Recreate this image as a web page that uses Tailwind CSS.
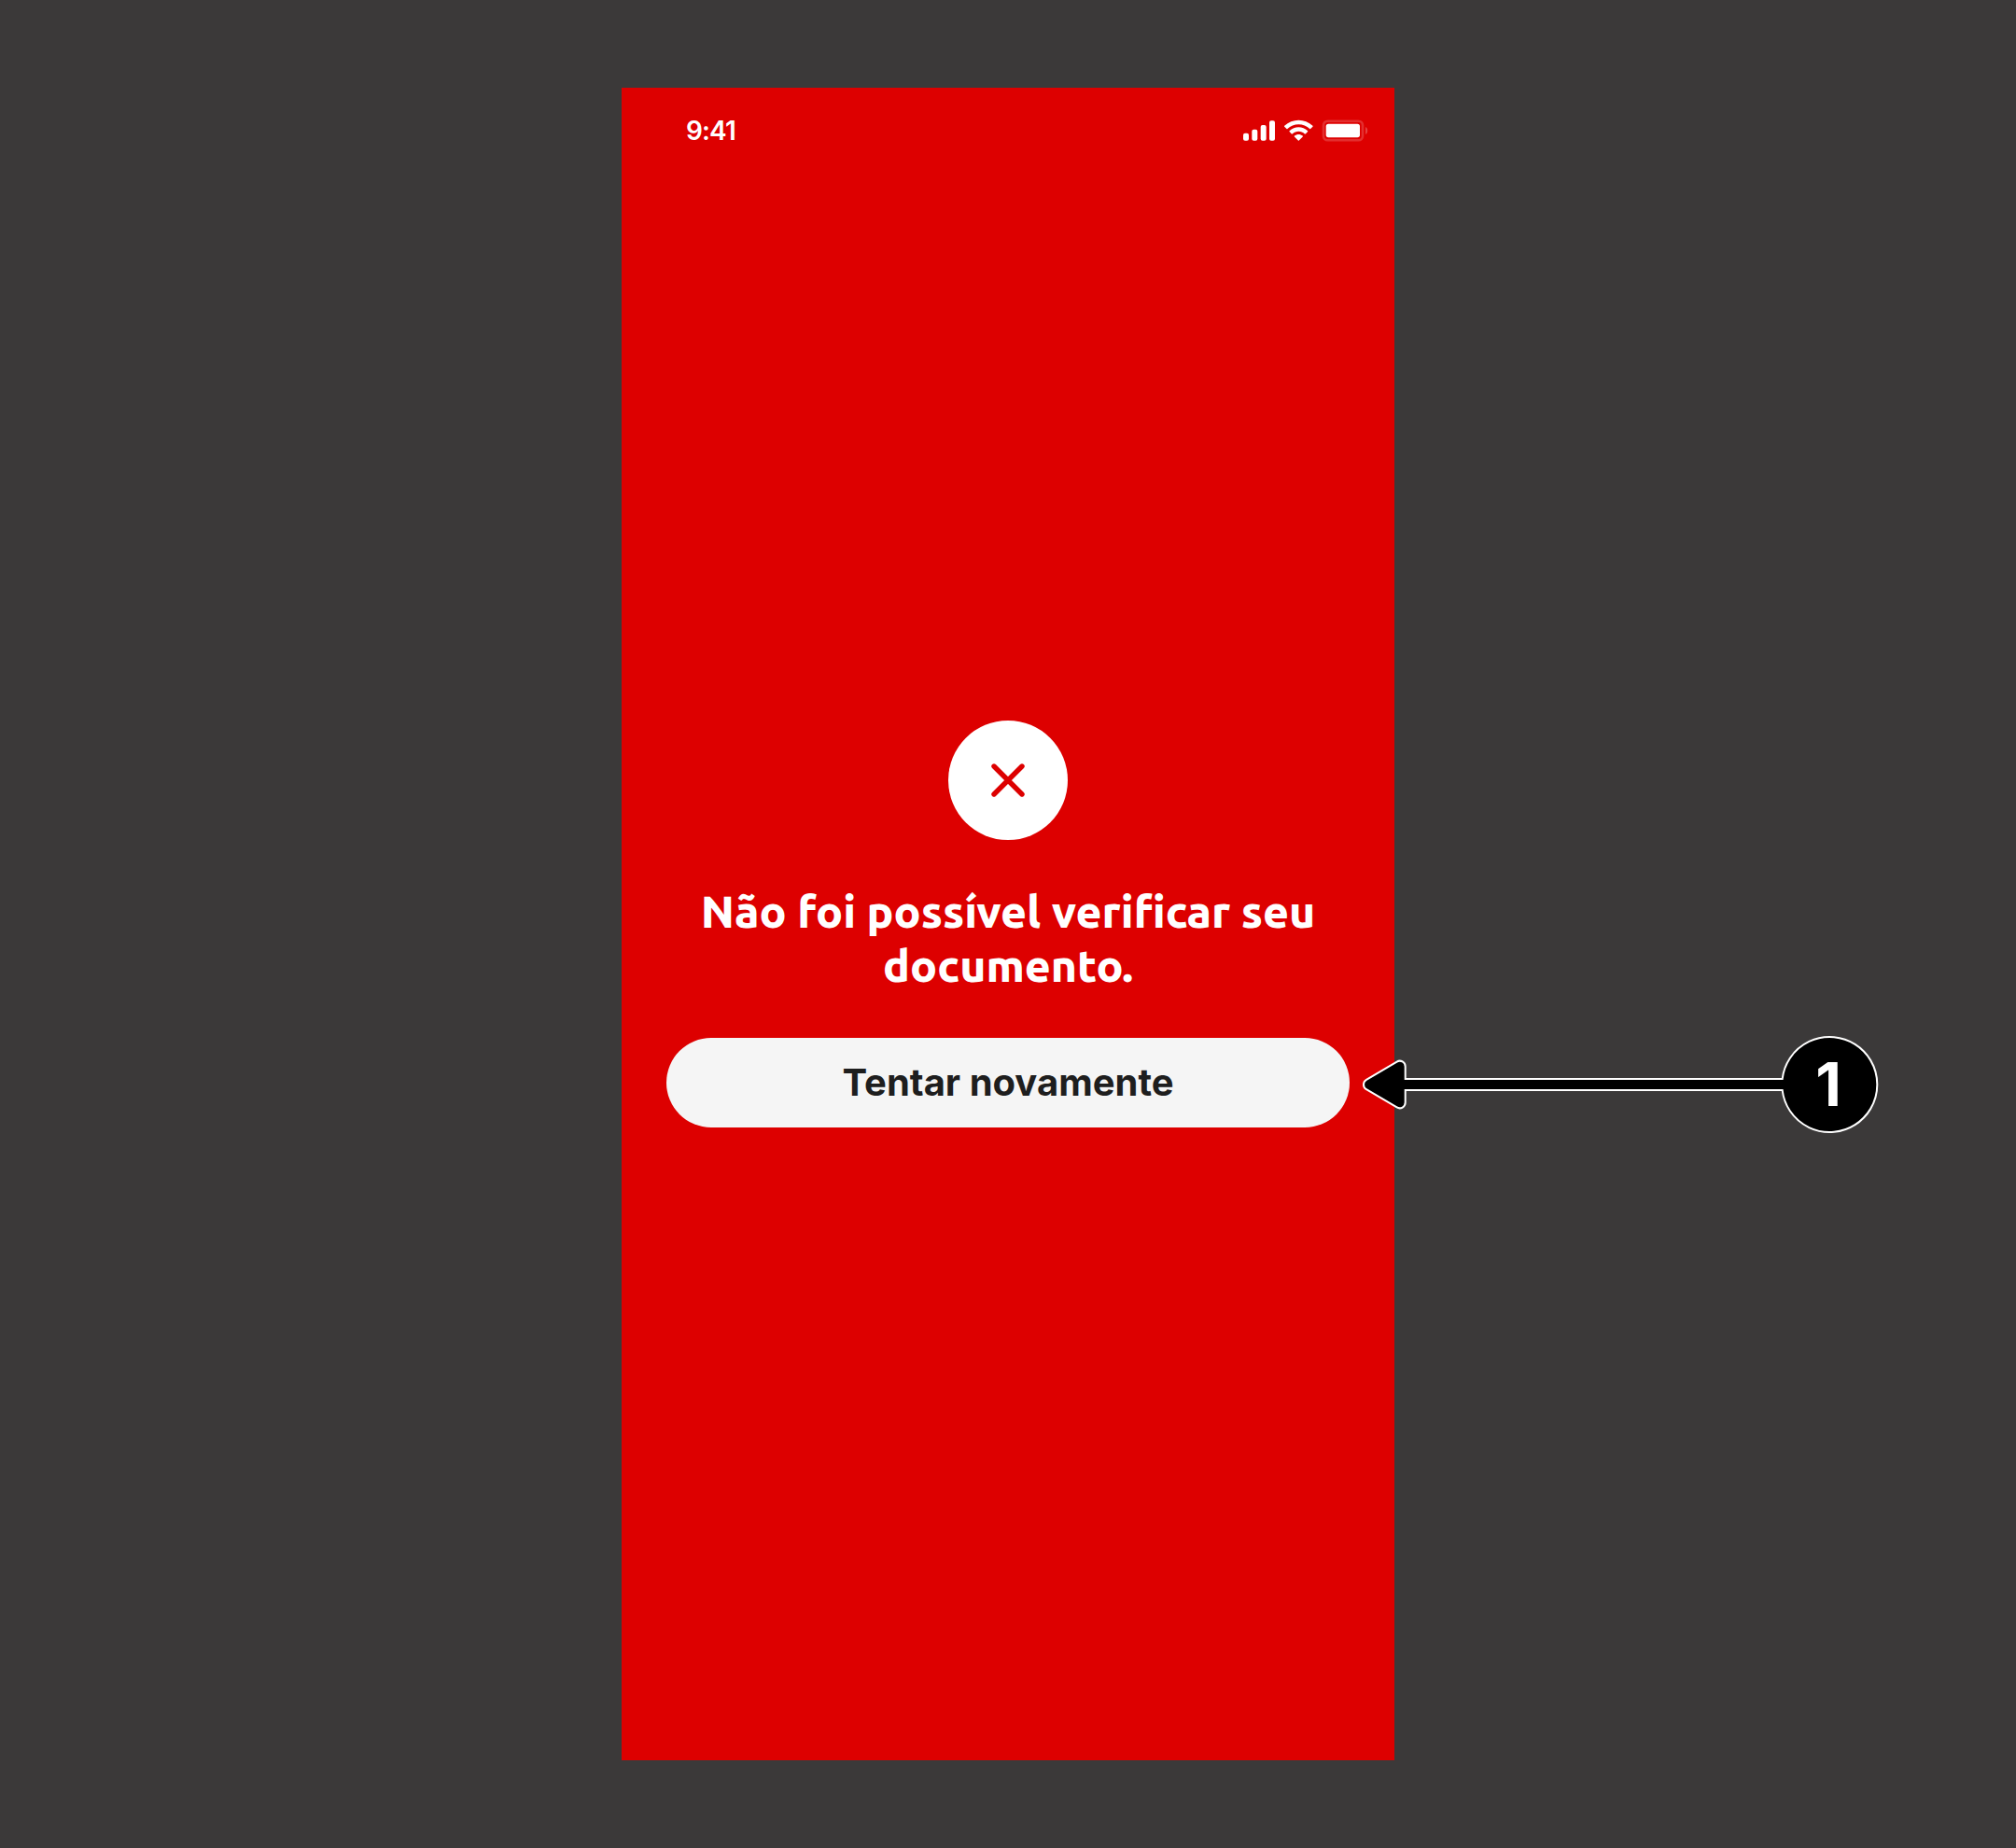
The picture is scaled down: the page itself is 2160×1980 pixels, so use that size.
<!DOCTYPE html>
<html lang="pt-BR">
<head>
<meta charset="utf-8">
<title>Verificação de documento</title>
<script src="https://cdn.jsdelivr.net/npm/@tailwindcss/browser@4"></script>
</head>
<body class="bg-[#3b3939]">
<div class="relative flex h-[1980px] w-[2160px] justify-center overflow-hidden pt-[94px] font-['Inter',sans-serif]">
  <main class="flex h-[1792px] w-[828px] flex-col bg-[#dd0000]">
    <header class="flex h-[92px] items-center justify-between pr-[28px] pl-[69px]">
      <span class="text-[28px] leading-none font-[560] tracking-[-0.9px] text-white">9:41</span>
      <svg class="h-[24px] w-[134px]" viewBox="0 0 134 24" fill="#fff">
        <rect x="0" y="14.7" width="6" height="8" rx="2"/>
        <rect x="9.3" y="10.7" width="6" height="12" rx="2"/>
        <rect x="18.7" y="6" width="6" height="16.7" rx="2"/>
        <rect x="28" y="1.3" width="6" height="21.4" rx="2"/>
        <path transform="translate(44 .7) scale(2)" d="M7.6667 2.2779C9.8915 2.278 12.0311 3.1329 13.6433 4.6658C13.7647 4.7842 13.9588 4.7827 14.0784 4.6625L15.2388 3.4917C15.2994 3.4307 15.3331 3.3481 15.3326 3.2622C15.332 3.1763 15.2973 3.0941 15.2359 3.0339C11.0043-1.0113 4.3285-1.0113.0969 3.0339C.0355 3.0941.0007 3.1762.0001 3.2621C-.0004 3.348.0333 3.4306.0938 3.4917L1.2546 4.6625C1.3741 4.7829 1.5683 4.7844 1.6896 4.6658C3.302 3.1328 5.4418 2.2779 7.6667 2.2779ZM7.6667 6.0868C8.889 6.0867 10.0677 6.541 10.9738 7.3614C11.0963 7.4779 11.2894 7.4753 11.4089 7.3558L12.5679 6.1849C12.629 6.1235 12.6629 6.0402 12.662 5.9536C12.6611 5.8671 12.6256 5.7845 12.5633 5.7243C9.804 3.1558 5.5316 3.1558 2.7724 5.7243C2.7101 5.7845 2.6745 5.8671 2.6737 5.9537C2.6729 6.0403 2.7069 6.1236 2.768 6.1849L3.9268 7.3558C4.0462 7.4753 4.2393 7.4779 4.3619 7.3614C5.2674 6.5415 6.4451 6.0872 7.6667 6.0868ZM9.9896 8.6497C9.9913 8.7365 9.9573 8.8202 9.8956 8.8809L7.8906 10.9041C7.8318 10.9636 7.7517 10.997 7.6681 10.997C7.5844 10.997 7.5043 10.9636 7.4455 10.9041L5.4402 8.8809C5.3785 8.8202 5.3446 8.7364 5.3464 8.6496C5.3482 8.5628 5.3854 8.4805 5.4495 8.4222C6.7295 7.3399 8.6047 7.3399 9.8847 8.4222C9.9487 8.4805 9.9879 8.5629 9.9896 8.6497Z"/>
        <rect x="86" y="1.7" width="42" height="20.6" rx="4.5" fill="none" stroke="#fff" stroke-width="2.6" stroke-opacity=".18"/>
        <rect x="88.7" y="4.7" width="36.3" height="14.6" rx="2.7"/>
        <path d="M131 8V16C132.6 15.3 133.2 13.8 133.2 12S132.6 8.7 131 8Z" fill-opacity=".25"/>
      </svg>
    </header>
    <section class="flex flex-col items-center px-12 pt-[586px]">
      <div class="flex size-32 items-center justify-center rounded-full bg-white">
        <svg class="size-9" viewBox="0 0 36 36" fill="none" stroke="#dd0000" stroke-width="5.4" stroke-linecap="round"><path d="M3 3L33 33M33 3L3 33"/></svg>
      </div>
      <h1 class="mt-[47px] text-center font-['Ubuntu','Noto_Sans',sans-serif] text-5xl leading-[58px] font-extrabold text-white">Não foi possível verificar seu<br>documento.</h1>
      <button class="mt-[49px] flex h-24 w-[732px] items-center justify-center rounded-full bg-[#f5f5f5] text-[40px] leading-none font-bold text-[#1e1e1e]">Tentar novamente</button>
    </section>
  </main>
  <!-- Numbered callout pointing at the button -->
  <div class="absolute top-[1108px] left-[1456px] h-[108px] w-[560px]">
    <svg class="absolute inset-0 size-full" viewBox="1456 1108 560 108" fill="#000" stroke="#fff" stroke-width="2"><path d="M1505.7 1156V1142.7A6 6 0 0 0 1496.65 1137.53L1463.95 1156.83A6 6 0 0 0 1463.95 1167.17L1496.65 1186.47A6 6 0 0 0 1505.7 1181.3V1168H1909.65A51 51 0 1 0 1909.65 1156Z"/></svg>
    <span class="absolute top-0 left-[451px] flex h-full w-[104px] items-center justify-center text-[64px] leading-none font-[750] text-white">1</span>
  </div>
</div>
</body>
</html>
